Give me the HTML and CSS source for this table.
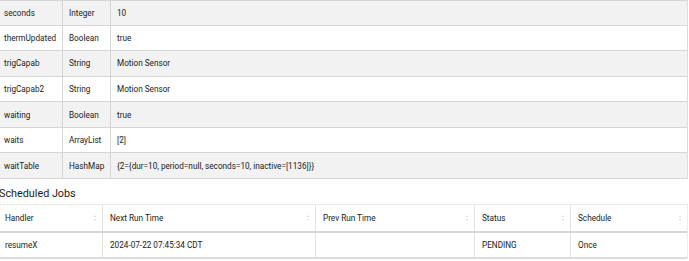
FILE: index.html
```html
<!DOCTYPE html>
<html>
<head>
<meta charset="utf-8">
<link rel="stylesheet" href="styles.css">
</head>
<body>
<div class="page">
  <div class="state">
    <div class="srow odd"><div class="c">seconds</div><div class="c">Integer</div><div class="c">10</div></div>
    <div class="srow"><div class="c">thermUpdated</div><div class="c">Boolean</div><div class="c">true</div></div>
    <div class="srow odd"><div class="c">trigCapab</div><div class="c">String</div><div class="c">Motion Sensor</div></div>
    <div class="srow"><div class="c">trigCapab2</div><div class="c">String</div><div class="c">Motion Sensor</div></div>
    <div class="srow odd"><div class="c">waiting</div><div class="c">Boolean</div><div class="c">true</div></div>
    <div class="srow"><div class="c">waits</div><div class="c">ArrayList</div><div class="c">[2]</div></div>
    <div class="srow odd"><div class="c">waitTable</div><div class="c">HashMap</div><div class="c">{2={dur=10, period=null, seconds=10, inactive=[1136]}}</div></div>
  </div>
  <h2 class="title">Scheduled Jobs</h2>
  <div class="jobs">
    <div class="jrow head">
      <div class="c">Handler<span class="sort"></span></div>
      <div class="c">Next Run Time<span class="sort"></span></div>
      <div class="c">Prev Run Time<span class="sort"></span></div>
      <div class="c">Status<span class="sort"></span></div>
      <div class="c">Schedule<span class="sort"></span></div>
    </div>
    <div class="jrow body">
      <div class="c">resumeX</div>
      <div class="c">2024-07-22 07:45:34 CDT</div>
      <div class="c"></div>
      <div class="c">PENDING</div>
      <div class="c">Once</div>
    </div>
  </div>
</div>
</body>
</html>
```
FILE: styles.css
```css
html, body {
  margin: 0;
  padding: 0;
  background: #fff;
}
body {
  font-family: Roboto, "Liberation Sans", sans-serif;
  font-size: 8.2px;
  color: #1a1a1a;
}
.page {
  margin-left: -2px;
  width: 690px;
}
.state {
  border-top: 1px solid #d6d6d6;
  border-right: 1px solid #dcdcdc;
}
.srow {
  display: grid;
  grid-template-columns: 64px 48px 1fr;
  height: 25.57px;
  box-sizing: border-box;
  border-bottom: 1px solid #d6d6d6;
  background: #fff;
}
.srow.odd {
  background: #f2f2f2;
}
.srow:first-child {
  height: 24.6px;
}
.c {
  display: flex;
  align-items: center;
  padding-left: 6px;
  position: relative;
  white-space: nowrap;
}
.srow .c + .c {
  border-left: 1px solid #d6d6d6;
}
.title {
  margin: 0;
  height: 25px;
  box-sizing: border-box;
  padding-top: 4px;
  display: flex;
  align-items: center;
  padding-left: 1px;
  font-size: 10.8px;
  font-weight: 400;
  color: #1a1a1a;
}
.jobs {
  border-top: 1px solid #ececec;
  border-right: 1px solid #ececec;
}
.jrow {
  display: grid;
  grid-template-columns: 104px 213px 159px 96px 117px;
  box-sizing: border-box;
}
.jrow.head {
  height: 28px;
  border-bottom: 2px solid #d6d6d6;
}
.jrow.body {
  height: 26px;
  border-bottom: 2px solid #dcdcdc;
}
.jrow .c {
  padding-left: 7px;
}
.jrow .c + .c {
  border-left: 1px solid #e2e2e2;
}
.sort {
  position: absolute;
  right: 7px;
  top: 50%;
  margin-top: -3px;
  width: 0;
  height: 6px;
}
.sort::before, .sort::after {
  content: "";
  position: absolute;
  left: -1.5px;
  border-left: 1.5px solid transparent;
  border-right: 1.5px solid transparent;
}
.sort::before {
  top: 0;
  border-bottom: 2px solid #d6d6d6;
}
.sort::after {
  bottom: 0;
  border-top: 2px solid #d6d6d6;
}
```
